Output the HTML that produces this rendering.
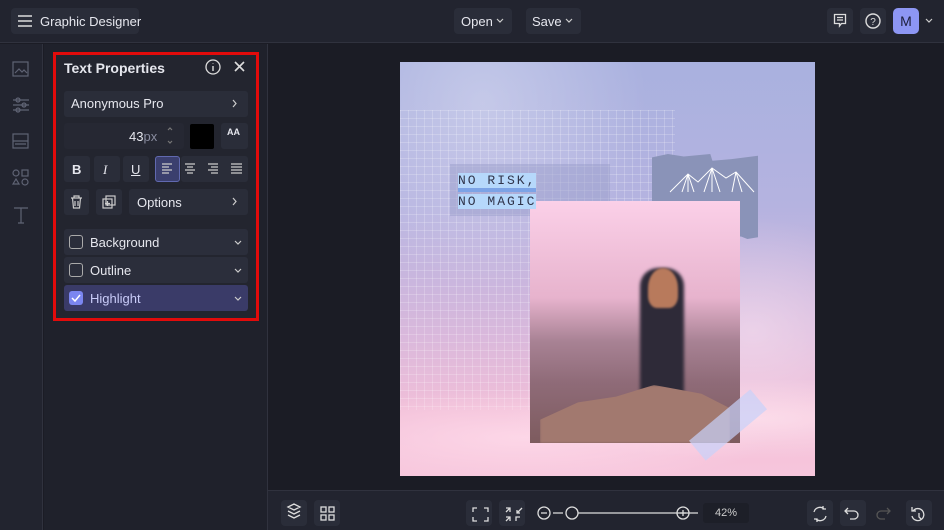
<!DOCTYPE html>
<html><head><style>
*{box-sizing:border-box;margin:0;padding:0}
body{width:944px;height:530px;background:#1b1c25;font-family:"Liberation Sans",sans-serif;color:#e6e7ee;position:relative;overflow:hidden;font-size:13px}
.a{position:absolute}
.btn{position:absolute;background:#2a2d39;border-radius:4px}
.row{position:absolute;background:#2a2d39;border-radius:3px}
svg{position:absolute}
</style></head><body>
<div class="a" style="left:0;top:0;width:944px;height:43px;background:#22242f;border-bottom:1px solid #30323e"></div>
<div class="btn" style="left:11px;top:8px;width:128px;height:26px"></div>
<svg style="left:17px;top:14px" width="16" height="14"><path d="M1 2h14M1 7h14M1 12h14" stroke="#ddd" stroke-width="1.6"/></svg>
<div class="a" style="left:40px;top:14px;font-size:13px">Graphic Designer</div>
<div class="btn" style="left:454px;top:8px;width:58px;height:26px"></div>
<div class="a" style="left:461px;top:14px">Open</div>
<div class="btn" style="left:526px;top:8px;width:55px;height:26px"></div>
<div class="a" style="left:532px;top:14px">Save</div>
<svg style="left:0;top:0" width="944" height="43" stroke="#ccc" fill="none" stroke-width="1.2"><path d="M497 19l3 3 3-3M566 19l3 3 3-3M926 19l3 3 3-3"/></svg>
<div class="btn" style="left:827px;top:8px;width:26px;height:26px"></div>
<svg style="left:833px;top:13px" width="14" height="15"><path d="M1.5 1.5h11v9h-4l-2 2.5v-2.5h-5z M4 4.5h6M4 7h6" stroke="#ddd" fill="none" stroke-width="1.3"/></svg>
<div class="btn" style="left:860px;top:8px;width:26px;height:26px"></div>
<svg style="left:865px;top:13px" width="16" height="16"><circle cx="8" cy="8" r="7" stroke="#ddd" fill="none" stroke-width="1.4"/><text x="8" y="12" font-size="10" fill="#ddd" text-anchor="middle" font-family="Liberation Sans">?</text></svg>
<div class="a" style="left:893px;top:8px;width:26px;height:26px;background:#8d96f3;border-radius:5px;color:#1c1e3a;text-align:center;line-height:26px;font-size:14px">M</div>

<div class="a" style="left:0;top:44px;width:43px;height:486px;background:#22242f;border-right:1px solid #30323e"></div>
<svg style="left:12px;top:61px" width="18" height="170" fill="none" stroke="#5f6374" stroke-width="1.2">
<rect x="1" y="1" width="15" height="14"/><path d="M3 12l4-4 3 3 2-2 3 3"/>
<path d="M1 39h16M1 44h16M1 49h16"/><circle cx="6" cy="39" r="2"/><circle cx="12" cy="44" r="2"/><circle cx="6" cy="49" r="2"/>
<rect x="1" y="73" width="15" height="14"/><path d="M1 80h15M3 83h11"/>
<circle cx="4" cy="112" r="3"/><rect x="10" y="109" width="6" height="6"/><path d="M1 123l3-5 3 5z"/><circle cx="13" cy="121" r="3"/>
<path d="M2 147h14M9 147v15M6 162h6"/>
</svg>
<div class="a" style="left:44px;top:44px;width:224px;height:486px;background:#1f212b;border-right:1px solid #30323e"></div>

<div class="a" style="left:53px;top:52px;width:206px;height:269px;border:3px solid #e20b0b;background:#23252f"></div>
<div class="a" style="left:64px;top:60px;font-size:14px;font-weight:bold">Text Properties</div>
<svg style="left:205px;top:59px" width="40" height="18"><circle cx="8" cy="8" r="7" stroke="#ddd" fill="none" stroke-width="1.3"/><path d="M8 7v5M8 4.5v.5" stroke="#ddd" stroke-width="1.4"/><path d="M30 3l9 9M39 3l-9 9" stroke="#ddd" stroke-width="1.6"/></svg>
<div class="row" style="left:64px;top:91px;width:184px;height:26px"></div>
<div class="a" style="left:71px;top:96px">Anonymous Pro</div>
<div class="row" style="left:64px;top:123px;width:120px;height:26px;background:#262833"></div>
<div class="a" style="left:129px;top:129px">43<span style="color:#8a8da0">px</span></div>
<div class="a" style="left:190px;top:124px;width:24px;height:25px;background:#000;border-radius:2px"></div>
<div class="row" style="left:221px;top:123px;width:27px;height:26px"></div>
<div class="a" style="left:227px;top:127px;font-size:9px;font-weight:bold">AA</div>
<div class="row" style="left:64px;top:156px;width:26px;height:26px"></div><div class="a" style="left:72px;top:162px;font-weight:bold">B</div>
<div class="row" style="left:94px;top:156px;width:26px;height:26px"></div><div class="a" style="left:103px;top:162px;font-style:italic;font-family:'Liberation Serif'">I</div>
<div class="row" style="left:123px;top:156px;width:26px;height:26px"></div><div class="a" style="left:131px;top:162px;text-decoration:underline">U</div>
<div class="row" style="left:155px;top:156px;width:25px;height:26px;background:#3b3f6e;border:1px solid #6169b0"></div>
<div class="row" style="left:181px;top:156px;width:67px;height:26px"></div>
<svg style="left:161px;top:162px" width="84" height="14" stroke="#ccc" stroke-width="1.2"><path d="M1 2h10M1 5h7M1 8h10M1 11h7"/><path d="M24 2h10M26 5h6M24 8h10M26 11h6"/><path d="M47 2h10M50 5h7M47 8h10M50 11h7"/><path d="M70 2h11M70 5h11M70 8h11M70 11h11"/></svg>
<div class="row" style="left:64px;top:189px;width:25px;height:26px"></div>
<svg style="left:70px;top:195px" width="13" height="14" stroke="#ccc" fill="none" stroke-width="1.2"><path d="M1 3h11M4 3V1h5v2M2.5 3l1 10h6l1-10M5 6v5M8 6v5"/></svg>
<div class="row" style="left:96px;top:189px;width:26px;height:26px"></div>
<svg style="left:102px;top:195px" width="14" height="14" stroke="#ccc" fill="none" stroke-width="1.2"><rect x="4" y="1" width="9" height="9"/><rect x="1" y="4" width="9" height="9"/><path d="M5.5 6v5M3 8.5h5"/></svg>
<div class="row" style="left:129px;top:189px;width:119px;height:26px"></div>
<div class="a" style="left:137px;top:195px">Options</div>
<div class="row" style="left:64px;top:229px;width:184px;height:26px;background:#2b2e3b"></div>
<div class="row" style="left:64px;top:257px;width:184px;height:26px;background:#2b2e3b"></div>
<div class="row" style="left:64px;top:285px;width:184px;height:26px;background:#3a3b68"></div>
<div class="a" style="left:69px;top:235px;width:14px;height:14px;border:1.3px solid #aaa;border-radius:3px"></div>
<div class="a" style="left:69px;top:263px;width:14px;height:14px;border:1.3px solid #aaa;border-radius:3px"></div>
<div class="a" style="left:69px;top:291px;width:14px;height:14px;background:#7b86f0;border-radius:3px"></div>
<div class="a" style="left:90px;top:235px">Background</div>
<div class="a" style="left:90px;top:263px">Outline</div>
<div class="a" style="left:90px;top:291px;color:#c9ccf8">Highlight</div>
<svg style="left:0;top:0" width="268" height="320" fill="none" stroke="#ccc" stroke-width="1.2">
<path d="M233 100l3 3.5-3 3.5M233 198l3 3.5-3 3.5"/>
<path d="M168 130l2-2 2 2M168 141l2 2 2-2" stroke="#777"/>
<path d="M235 241l3 3 3-3M235 269l3 3 3-3M235 297l3 3 3-3"/>
<path d="M72 298l3 3 5-6" stroke="#fff" stroke-width="1.5"/>
</svg>

<!-- canvas -->
<div class="a" style="left:400px;top:62px;width:415px;height:414px;background:linear-gradient(180deg,#a9b1df 0%,#b5b3e0 35%,#d8b8dc 65%,#f2bfd8 85%,#f7c6dc 100%)"></div>
<div class="a" style="left:400px;top:62px;width:415px;height:414px;background:radial-gradient(ellipse at 20% 10%,rgba(255,255,255,.3),transparent 35%),radial-gradient(ellipse at 85% 65%,rgba(255,235,245,.5),transparent 30%)"></div>
<div class="a" style="left:400px;top:110px;width:275px;height:300px;background-image:linear-gradient(rgba(255,255,255,.2) 1px,transparent 1px),linear-gradient(90deg,rgba(255,255,255,.2) 1px,transparent 1px);background-size:8px 8px"></div>
<div class="a" style="left:400px;top:380px;width:415px;height:96px;background:radial-gradient(ellipse at 30% 60%,rgba(255,220,235,.8),transparent 60%),radial-gradient(ellipse at 85% 40%,rgba(255,230,240,.7),transparent 50%)"></div>
<div class="a" style="left:450px;top:164px;width:160px;height:52px;background:rgba(150,155,200,.45)"></div>
<div class="a" style="left:652px;top:154px;width:106px;height:85px;background:#8a93b8;clip-path:polygon(0 4%,15% 0,30% 3%,55% 0,57% 8%,75% 6%,100% 2%,100% 98%,90% 100%,84% 97%,0 97%)"></div>
<svg style="left:668px;top:160px" width="90" height="36" stroke="#fff" fill="none" stroke-width="1"><path d="M2 32l18-18 10 8 14-14 14 10 10-6 18 20M20 14l-6 18M20 14l0 18M20 14l6 18M44 8l-8 24M44 8l0 24M44 8l8 24M68 12l-4 20M68 12l6 20"/></svg>
<div class="a" style="left:530px;top:201px;width:210px;height:242px;background:linear-gradient(180deg,#fbd0e8 0%,#e7b3cd 40%,#a88294 58%,#8f6b78 75%,#7d5b5e 100%);overflow:hidden">
<div class="a" style="left:110px;top:67px;width:44px;height:128px;background:#2e2a38;border-radius:18px 18px 4px 4px;filter:blur(1.5px)"></div>
<div class="a" style="left:118px;top:67px;width:30px;height:40px;background:#b87a5c;border-radius:50% 50% 30% 30%;filter:blur(1px)"></div>
<div class="a" style="left:10px;top:184px;width:190px;height:58px;background:#a2796f;clip-path:polygon(0 60%,20% 30%,40% 20%,60% 0,85% 15%,100% 40%,100% 100%,0 100%);filter:blur(1px)"></div>
</div>
<div class="a" style="left:688px;top:412px;width:80px;height:26px;background:rgba(200,210,250,.7);transform:rotate(-40deg)"></div>
<div class="a" style="left:458px;top:170px;font-family:'Liberation Mono',monospace;font-size:13px;letter-spacing:2px;color:#30344a;line-height:21px"><span style="background:#b6d8fb;border-bottom:4px solid #7ca3e6">NO RISK,</span><br><span style="background:#b6d8fb">NO MAGIC</span></div>

<!-- bottom bar -->
<div class="a" style="left:268px;top:490px;width:676px;height:40px;background:#22242f;border-top:1px solid #30323e"></div>
<div class="btn" style="left:281px;top:500px;width:26px;height:26px"></div>
<div class="btn" style="left:314px;top:500px;width:26px;height:26px"></div>
<div class="btn" style="left:466px;top:500px;width:26px;height:26px"></div>
<div class="btn" style="left:499px;top:500px;width:26px;height:26px"></div>
<div class="btn" style="left:807px;top:500px;width:26px;height:26px"></div>
<div class="btn" style="left:840px;top:500px;width:26px;height:26px"></div>
<div class="btn" style="left:906px;top:500px;width:26px;height:26px"></div>
<svg style="left:268px;top:490px" width="676" height="40" stroke="#ddd" fill="none" stroke-width="1.3">
<path d="M20 17l6-3 6 3-6 3zM20 21l6 3 6-3M20 25l6 3 6-3"/>
<rect x="53" y="17" width="5" height="5"/><rect x="61" y="17" width="5" height="5"/><rect x="53" y="25" width="5" height="5"/><rect x="61" y="25" width="5" height="5"/>
<path d="M205 22v-4h4M216 18h4v4M220 27v4h-4M209 31h-4v-4"/>
<path d="M238 18h4v4M238 22l4-4M254 18l-5 5M249 20v3h3M238 31l4-4M238 27h4v4M248 31v-4h4"/>
<circle cx="276" cy="23" r="6"/><path d="M273 23h6"/>
<path d="M285 23h10M310 23h120"/><circle cx="304" cy="23" r="6"/>
<circle cx="415" cy="23" r="6"/><path d="M412 23h6M415 20v6"/>
<path d="M546 22a6 6 0 0 1 10-3M558 26a6 6 0 0 1-10 3M555 16v3h3M549 32v-3h-3"/>
<path d="M577 21h9a4 4 0 0 1 0 8h-4M580 18l-3 3 3 3"/>
<path d="M622 21h-9a4 4 0 0 0 0 8h4M619 18l3 3-3 3" stroke="#555"/>
<path d="M645 21a6 6 0 1 1-1 5M644 17v4h4M651 23v4l2 2"/>
</svg>
<div class="a" style="left:703px;top:503px;width:46px;height:20px;background:#1d1f28;border-radius:3px;font-size:11px;line-height:20px;text-align:center;color:#ccc">42%</div>
</body></html>
